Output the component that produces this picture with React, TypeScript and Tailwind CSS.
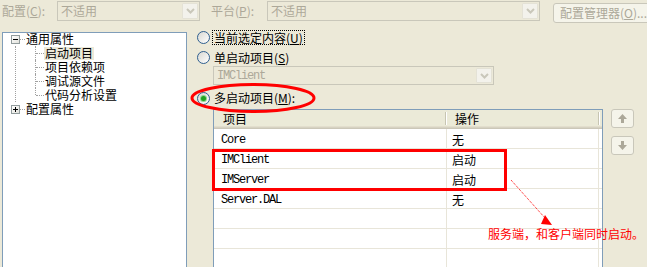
import React from "react";

function Chevron() {
  return (
    <svg width="9" height="6" viewBox="0 0 9 6">
      <path d="M1 1 L4.5 4.5 L8 1" fill="none" stroke="#C9C7BA" strokeWidth="2" />
    </svg>
  );
}

function Combo({ w, h, text, mono }: { w: string; h: string; text: string; mono?: boolean }) {
  return (
    <div className={`flex shrink-0 items-stretch border border-[#C9C7BA] bg-[#ECE9D8] ${w} ${h}`}>
      <span
        className={`flex flex-1 items-center pl-[3px] text-[#ACA899] ${
          mono ? "font-['Liberation_Mono',monospace] text-[12px] tracking-[-1.2px]" : ""
        }`}
      >
        {text}
      </span>
      <span className="m-[1px] flex w-[16px] items-center justify-center rounded-[1px] border border-[#E4E2D6] bg-[#F3F2EC]">
        <Chevron />
      </span>
    </div>
  );
}

function Radio({ checked }: { checked?: boolean }) {
  return (
    <span className="flex h-[13px] w-[13px] shrink-0 items-center justify-center rounded-full border border-[#2F5F8F] bg-gradient-to-br from-[#D8D8D2] to-white">
      {checked && <span className="h-[5px] w-[5px] rounded-full bg-[#21A121] shadow-[0_0_0_1px_#8DD68D]" />}
    </span>
  );
}

function ExpandBox({ open }: { open?: boolean }) {
  return (
    <span className="relative flex h-[9px] w-[9px] shrink-0 items-center justify-center border border-[#919B9C] bg-gradient-to-br from-white to-[#E2E2DC]">
      <span className="h-[1px] w-[5px] bg-black" />
      {!open && <span className="absolute h-[5px] w-[1px] bg-black" />}
    </span>
  );
}

function ArrowIcon({ down }: { down?: boolean }) {
  return (
    <svg width="9" height="9" viewBox="0 0 9 9" className={down ? "rotate-180" : ""}>
      <path d="M4.5 0 L9 5 L6 5 L6 9 L3 9 L3 5 L0 5 Z" fill="#ACA899" />
    </svg>
  );
}

const children = ["启动项目", "项目依赖项", "调试源文件", "代码分析设置"];

function Tree() {
  return (
    <div className="ml-[2px] mt-[2px] h-[240px] w-[185px] shrink-0 border border-[#7F9DB9] bg-white">
      <div className="-mt-[1px]">
        <div className="flex h-[14px] items-center pl-[8px]">
          <ExpandBox open />
          <span className="w-[5px] border-t border-dotted border-[#A0A0A0]" />
          <span className="ml-[1px] leading-[12px]">通用属性</span>
        </div>
        <div className="ml-[12px] border-l border-dotted border-[#A0A0A0]">
          {children.map((c, i) => (
            <div key={c} className="ml-[19px] flex h-[14px] items-center">
              <span
                className={`w-0 border-l border-dotted border-[#A0A0A0] ${
                  i === children.length - 1 ? "h-[7px] self-start" : "self-stretch"
                }`}
              />
              <span className="w-[8px] border-t border-dotted border-[#A0A0A0]" />
              <span className={`flex h-[13px] items-center px-[1px] leading-[12px] ${i === 0 ? "bg-[#ECE9D8]" : ""}`}>
                {c}
              </span>
            </div>
          ))}
        </div>
        <div className="flex h-[14px] items-center pl-[8px]">
          <ExpandBox />
          <span className="w-[5px] border-t border-dotted border-[#A0A0A0]" />
          <span className="ml-[1px] leading-[12px]">配置属性</span>
        </div>
      </div>
    </div>
  );
}

const rows: [string, string][] = [
  ["Core", "无"],
  ["IMClient", "启动"],
  ["IMServer", "启动"],
  ["Server.DAL", "无"],
  ["", ""],
  ["", ""],
  ["", ""],
];

function ProjectTable() {
  return (
    <div className="h-[170px] w-[390px] shrink-0 border border-[#7F9DB9] bg-white">
      <div className="flex h-[19px] bg-[#EBEAD8] shadow-[inset_0_-1px_#CBC7B8,inset_0_-2px_#D6D2C2,inset_0_-3px_#E2DECD]">
        <div className="flex w-[233px] items-center justify-between pb-[2px] pl-[9px]">
          <span>项目</span>
          <span className="h-[13px] w-[2px] border-l border-[#C7C5B2] bg-white" />
        </div>
        <div className="flex w-[153px] items-center justify-between pb-[2px] pl-[8px]">
          <span>操作</span>
          <span className="h-[13px] w-[2px] border-l border-[#C7C5B2] bg-white" />
        </div>
      </div>
      {rows.map(([name, action], i) => (
        <div key={i} className="flex h-[20px] border-b border-[#E8E5D9]">
          <div className="flex w-[233px] items-center border-r border-[#E8E5D9] pl-[7px] pt-[2px] font-['Liberation_Mono',monospace] text-[12px] tracking-[-1.2px]">
            {name}
          </div>
          <div className="flex w-[152px] items-center border-r border-[#E8E5D9] pl-[5px] pt-[2px]">{action}</div>
        </div>
      ))}
    </div>
  );
}

export default function App() {
  return (
    <div className="relative h-[267px] w-[647px] overflow-hidden bg-[#ECE9D8] font-['Noto_Sans_CJK_SC',sans-serif] text-[12px] leading-[14px] text-black">
      {/* top bar */}
      <div className="flex h-[30px] items-start whitespace-nowrap">
        <span className="ml-[2px] mt-[4px] w-[55px] shrink-0 text-[#ACA899]">
          配置(<u>C</u>):
        </span>
        <div className="mt-[1px]">
          <Combo w="w-[143px]" h="h-[20px]" text="不适用" />
        </div>
        <span className="ml-[11px] mt-[4px] w-[56px] shrink-0 text-[#ACA899]">
          平台(<u>P</u>):
        </span>
        <div className="mt-[1px]">
          <Combo w="w-[273px]" h="h-[20px]" text="不适用" />
        </div>
        <button className="ml-[13px] mt-[3px] h-[20px] w-[100px] shrink-0 rounded-[3px] border border-[#C9C7BA] bg-[#F5F4EA] pl-[6px] text-left text-[#ACA899]">
          配置管理器(<u>O</u>)...
        </button>
      </div>

      <div className="flex items-start">
        <Tree />
        <div className="flex flex-col whitespace-nowrap pl-[10px]">
          <div className="flex h-[15px] items-center">
            <Radio />
            <span className="ml-[2px] flex h-[15px] items-center border border-dotted border-black px-[1px]">
              当前选定内容(<u>U</u>)
            </span>
          </div>
          <div className="mt-[5px] flex h-[15px] items-center">
            <Radio />
            <span className="ml-[4px]">
              单启动项目(<u>S</u>)
            </span>
          </div>
          <div className="ml-[16px] mt-[1px]">
            <Combo w="w-[281px]" h="h-[19px]" text="IMClient" mono />
          </div>
          <div className="mt-[6px] flex h-[14px] items-center">
            <Radio checked />
            <span className="ml-[4px]">
              多启动项目(<u>M</u>):
            </span>
          </div>
          <div className="ml-[16px] mt-[4px] flex items-start">
            <ProjectTable />
            <div className="ml-[8px] flex flex-col gap-[8px]">
              <button className="flex h-[19px] w-[23px] items-center justify-center rounded-[3px] border border-[#C9C7BA] bg-[#F5F4EA]">
                <ArrowIcon />
              </button>
              <button className="flex h-[19px] w-[23px] items-center justify-center rounded-[3px] border border-[#C9C7BA] bg-[#F5F4EA]">
                <ArrowIcon down />
              </button>
            </div>
          </div>
        </div>
      </div>

      {/* red annotations drawn over the dialog */}
      <svg className="pointer-events-none absolute left-0 top-0" width="647" height="267">
        <ellipse cx="253" cy="98" rx="61" ry="13.5" fill="none" stroke="#FF0000" strokeWidth="3" />
        <rect x="213.5" y="150.5" width="292" height="39" fill="none" stroke="#FF0000" strokeWidth="3" />
        <line x1="511" y1="180" x2="545" y2="218" stroke="#FF0000" strokeWidth="1" strokeDasharray="1 1" />
        <polygon points="545,215 541,224 552,225" fill="#FF0000" />
      </svg>
      <div className="absolute left-[488px] top-[227px] whitespace-nowrap text-[#FF0000]">服务端，和客户端同时启动。</div>
    </div>
  );
}
